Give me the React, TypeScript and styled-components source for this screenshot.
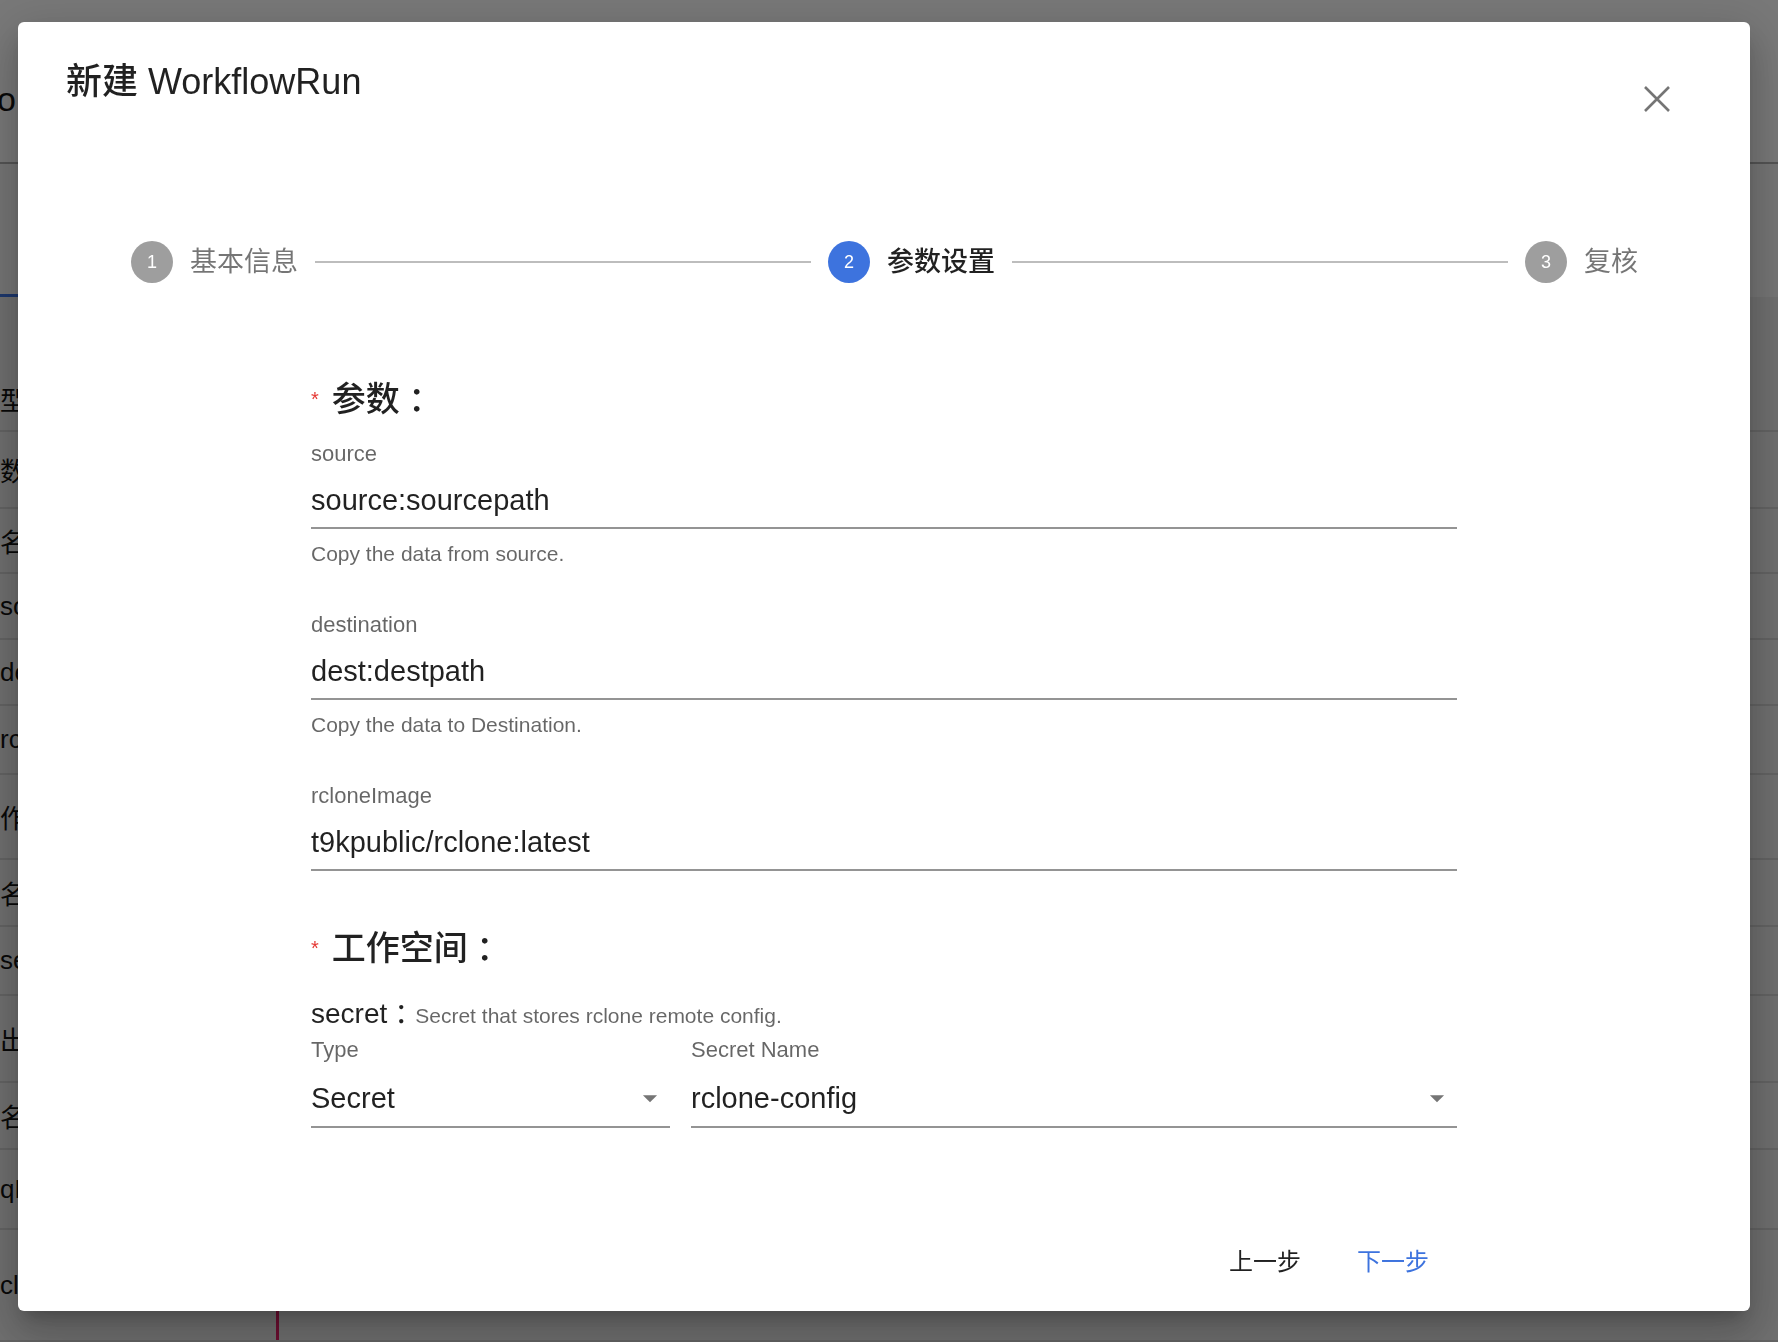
import React from 'react';
import styled, { createGlobalStyle } from 'styled-components';

const FONT = `"Liberation Sans", Arial, "Noto Sans CJK SC", sans-serif`;
const BLUE = '#3d73de';
const TEXT = 'rgba(0, 0, 0, 0.87)';
const MUTED = 'rgba(0, 0, 0, 0.6)';

const GlobalStyle = createGlobalStyle`
  * {
    box-sizing: border-box;
  }

  html,
  body {
    margin: 0;
    padding: 0;
  }

  body {
    width: 1778px;
    height: 1342px;
    overflow: hidden;
    font-family: ${FONT};
    background: #dedede;
  }
`;

// ---------- page behind the dialog ----------

const Page = styled.div`
  height: 1342px;
  display: flex;
  flex-direction: column;
  background: #dedede;
`;

const PageHeader = styled.div`
  height: 164px;
  display: flex;
  align-items: center;
  padding-top: 36px;
  background: #f0f0f0;
  border-bottom: 2px solid #a8a8a8;
`;

const HeaderCell = styled.div`
  width: 16px;
  display: flex;
  justify-content: flex-end;
  white-space: nowrap;
  font-size: 34px;
  color: #111;
`;

const Tabs = styled.div`
  height: 133px;
  display: flex;
  align-items: flex-end;
  background: #eaeaea;
`;

const TabIndicator = styled.div`
  width: 220px;
  height: 3px;
  background: #3b6fd9;
`;

const Spacer = styled.div`
  height: 69px;
`;

interface PageRowProps {
  h: number;
}

const PageRow = styled.div<PageRowProps>`
  height: ${({ h }) => h}px;
  flex-shrink: 0;
  display: flex;
  align-items: center;
  border-bottom: 2px solid #c6c6c6;
`;

const PageCell = styled.div`
  width: 260px;
  flex-shrink: 0;
  white-space: nowrap;
  font-size: 26px;
  color: #111;
`;

const Marker = styled.div`
  align-self: stretch;
  width: 3px;
  margin-left: 16px;
  background: #d81b60;
`;

const pageRows = [
  { label: '型', h: 66 },
  { label: '数', h: 77 },
  { label: '名', h: 65 },
  { label: 'source', h: 66 },
  { label: 'destination', h: 66 },
  { label: 'rcloneImage', h: 69 },
  { label: '作', h: 85 },
  { label: '名', h: 67 },
  { label: 'secret', h: 69 },
  { label: '出', h: 87 },
  { label: '名', h: 67 },
  { label: 'qFile', h: 80 },
  { label: 'clone', h: 112, marker: true },
];

// ---------- dialog ----------

const Overlay = styled.div`
  position: fixed;
  inset: 0;
  display: flex;
  padding: 22px 28px 31px 18px;
  background: rgba(0, 0, 0, 0.5);
`;

const Dialog = styled.div`
  flex: 1;
  display: flex;
  flex-direction: column;
  background: #fff;
  border-radius: 6px;
  box-shadow: 0 11px 15px -7px rgba(0, 0, 0, 0.2), 0 24px 38px 3px rgba(0, 0, 0, 0.14),
    0 9px 46px 8px rgba(0, 0, 0, 0.12);
`;

const Header = styled.div`
  display: flex;
  justify-content: space-between;
  align-items: flex-start;
  padding: 40px 69px 0 48px;
`;

const Title = styled.h2`
  margin: 0;
  font-size: 36px;
  line-height: 40px;
  font-weight: 500;
  color: ${TEXT};
`;

const CloseButton = styled.button`
  width: 48px;
  height: 48px;
  margin-top: 13px;
  padding: 0;
  border: none;
  background: none;
  display: flex;
  align-items: center;
  justify-content: center;
  cursor: pointer;
`;

const Stepper = styled.div`
  display: flex;
  align-items: center;
  gap: 17px;
  margin-top: 118px;
  padding: 0 112px 0 113px;
`;

const Step = styled.div`
  display: flex;
  align-items: center;
  gap: 17px;
`;

const StepIcon = styled.div<{ active?: boolean }>`
  width: 42px;
  height: 42px;
  border-radius: 50%;
  display: flex;
  align-items: center;
  justify-content: center;
  font-size: 18px;
  color: #fff;
  background: ${({ active }) => (active ? BLUE : '#9e9e9e')};
`;

const StepLabel = styled.span<{ active?: boolean }>`
  font-size: 27px;
  line-height: 34px;
  font-weight: ${({ active }) => (active ? 500 : 400)};
  color: ${({ active }) => (active ? TEXT : 'rgba(0, 0, 0, 0.54)')};
`;

const Connector = styled.div`
  flex: 1;
  height: 2px;
  background: #bdbdbd;
`;

const Form = styled.div`
  width: 1146px;
  margin: 94px auto 0;
  display: flex;
  flex-direction: column;
`;

const SectionTitle = styled.div<{ gap?: number }>`
  display: flex;
  align-items: center;
  margin-top: ${({ gap }) => gap || 0}px;
  font-size: 34px;
  line-height: 44px;
  font-weight: 500;
  color: ${TEXT};
`;

// centred full-width colon, as in the reference
const Colon = styled.span`
  font-family: "Noto Sans CJK TC", "Noto Sans CJK SC", sans-serif;
`;

const InlineColon = styled(Colon)`
  line-height: 0;
  vertical-align: -0.08em;
`;

const Star = styled.span`
  margin-right: 13px;
  font-size: 20px;
  line-height: 20px;
  font-weight: 400;
  color: #e53935;
`;

const Fields = styled.div`
  display: flex;
  flex-direction: column;
  gap: 45px;
  margin-top: 20px;
`;

const Field = styled.div`
  display: flex;
  flex-direction: column;
`;

const FieldLabel = styled.label`
  font-size: 22px;
  line-height: 26px;
  color: ${MUTED};
`;

const Input = styled.input`
  width: 100%;
  height: 62px;
  padding: 15px 0 9px;
  border: none;
  border-bottom: 2px solid #949494;
  outline: none;
  font-family: ${FONT};
  font-size: 29px;
  line-height: 36px;
  color: ${TEXT};
  background: none;
`;

const Helper = styled.p`
  margin: 12px 0 0;
  font-size: 21px;
  line-height: 26px;
  color: ${MUTED};
`;

const SecretLine = styled.div`
  height: 34px;
  margin-top: 27px;
  font-size: 28px;
  line-height: 34px;
  color: ${TEXT};
`;

const SecretHint = styled.span`
  font-size: 21px;
  color: ${MUTED};
`;

const SelectRow = styled.div`
  display: grid;
  grid-template-columns: 359px 1fr;
  gap: 21px;
  margin-top: 6px;
`;

const SelectBox = styled.div`
  display: flex;
  align-items: center;
  padding: 17px 3px 10px 0;
  border-bottom: 2px solid #949494;
  cursor: pointer;
`;

const SelectValue = styled.span`
  flex: 1;
  font-size: 29px;
  line-height: 36px;
  color: ${TEXT};
`;

const Actions = styled.div`
  width: 1146px;
  margin: auto auto 0;
  padding-bottom: 25px;
  display: flex;
  justify-content: flex-end;
`;

const ActionButton = styled.button<{ primary?: boolean }>`
  padding: 0 28px;
  border: none;
  background: none;
  font-family: ${FONT};
  font-size: 24px;
  line-height: 48px;
  color: ${({ primary }) => (primary ? BLUE : TEXT)};
  cursor: pointer;
`;

const CloseIcon = () => (
  <svg width="26" height="26" viewBox="0 0 26 26">
    <path d="M1 1L25 25M25 1L1 25" stroke="#757575" strokeWidth="2.6" fill="none" />
  </svg>
);

const ArrowIcon = () => (
  <svg width="34" height="34" viewBox="0 0 24 24">
    <path d="M7 10l5 5 5-5z" fill="#757575" />
  </svg>
);

const steps = ['基本信息', '参数设置', '复核'];
const ACTIVE = 1;

const params = [
  { name: 'source', value: 'source:sourcepath', help: 'Copy the data from source.' },
  { name: 'destination', value: 'dest:destpath', help: 'Copy the data to Destination.' },
  { name: 'rcloneImage', value: 't9kpublic/rclone:latest' },
];

export default function App() {
  return (
    <>
      <GlobalStyle />
      <Page>
        <PageHeader>
          <HeaderCell>Info</HeaderCell>
        </PageHeader>
        <Tabs>
          <TabIndicator />
        </Tabs>
        <Spacer />
        {pageRows.map((r, i) => (
          <PageRow key={i} h={r.h}>
            <PageCell>{r.label}</PageCell>
            {r.marker && <Marker />}
          </PageRow>
        ))}
      </Page>

      <Overlay>
        <Dialog>
          <Header>
            <Title>新建 WorkflowRun</Title>
            <CloseButton aria-label="close">
              <CloseIcon />
            </CloseButton>
          </Header>

          <Stepper>
            {steps.map((s, i) => (
              <React.Fragment key={s}>
                {i > 0 && <Connector />}
                <Step>
                  <StepIcon active={i === ACTIVE}>{i + 1}</StepIcon>
                  <StepLabel active={i === ACTIVE}>{s}</StepLabel>
                </Step>
              </React.Fragment>
            ))}
          </Stepper>

          <Form>
            <SectionTitle>
              <Star>*</Star>参数<Colon>：</Colon>
            </SectionTitle>
            <Fields>
              {params.map((p) => (
                <Field key={p.name}>
                  <FieldLabel>{p.name}</FieldLabel>
                  <Input defaultValue={p.value} />
                  {p.help && <Helper>{p.help}</Helper>}
                </Field>
              ))}
            </Fields>

            <SectionTitle gap={55}>
              <Star>*</Star>工作空间<Colon>：</Colon>
            </SectionTitle>
            <SecretLine>
              secret<InlineColon>：</InlineColon>
              <SecretHint>Secret that stores rclone remote config.</SecretHint>
            </SecretLine>
            <SelectRow>
              <Field>
                <FieldLabel>Type</FieldLabel>
                <SelectBox>
                  <SelectValue>Secret</SelectValue>
                  <ArrowIcon />
                </SelectBox>
              </Field>
              <Field>
                <FieldLabel>Secret Name</FieldLabel>
                <SelectBox>
                  <SelectValue>rclone-config</SelectValue>
                  <ArrowIcon />
                </SelectBox>
              </Field>
            </SelectRow>
          </Form>

          <Actions>
            <ActionButton>上一步</ActionButton>
            <ActionButton primary>下一步</ActionButton>
          </Actions>
        </Dialog>
      </Overlay>
    </>
  );
}
